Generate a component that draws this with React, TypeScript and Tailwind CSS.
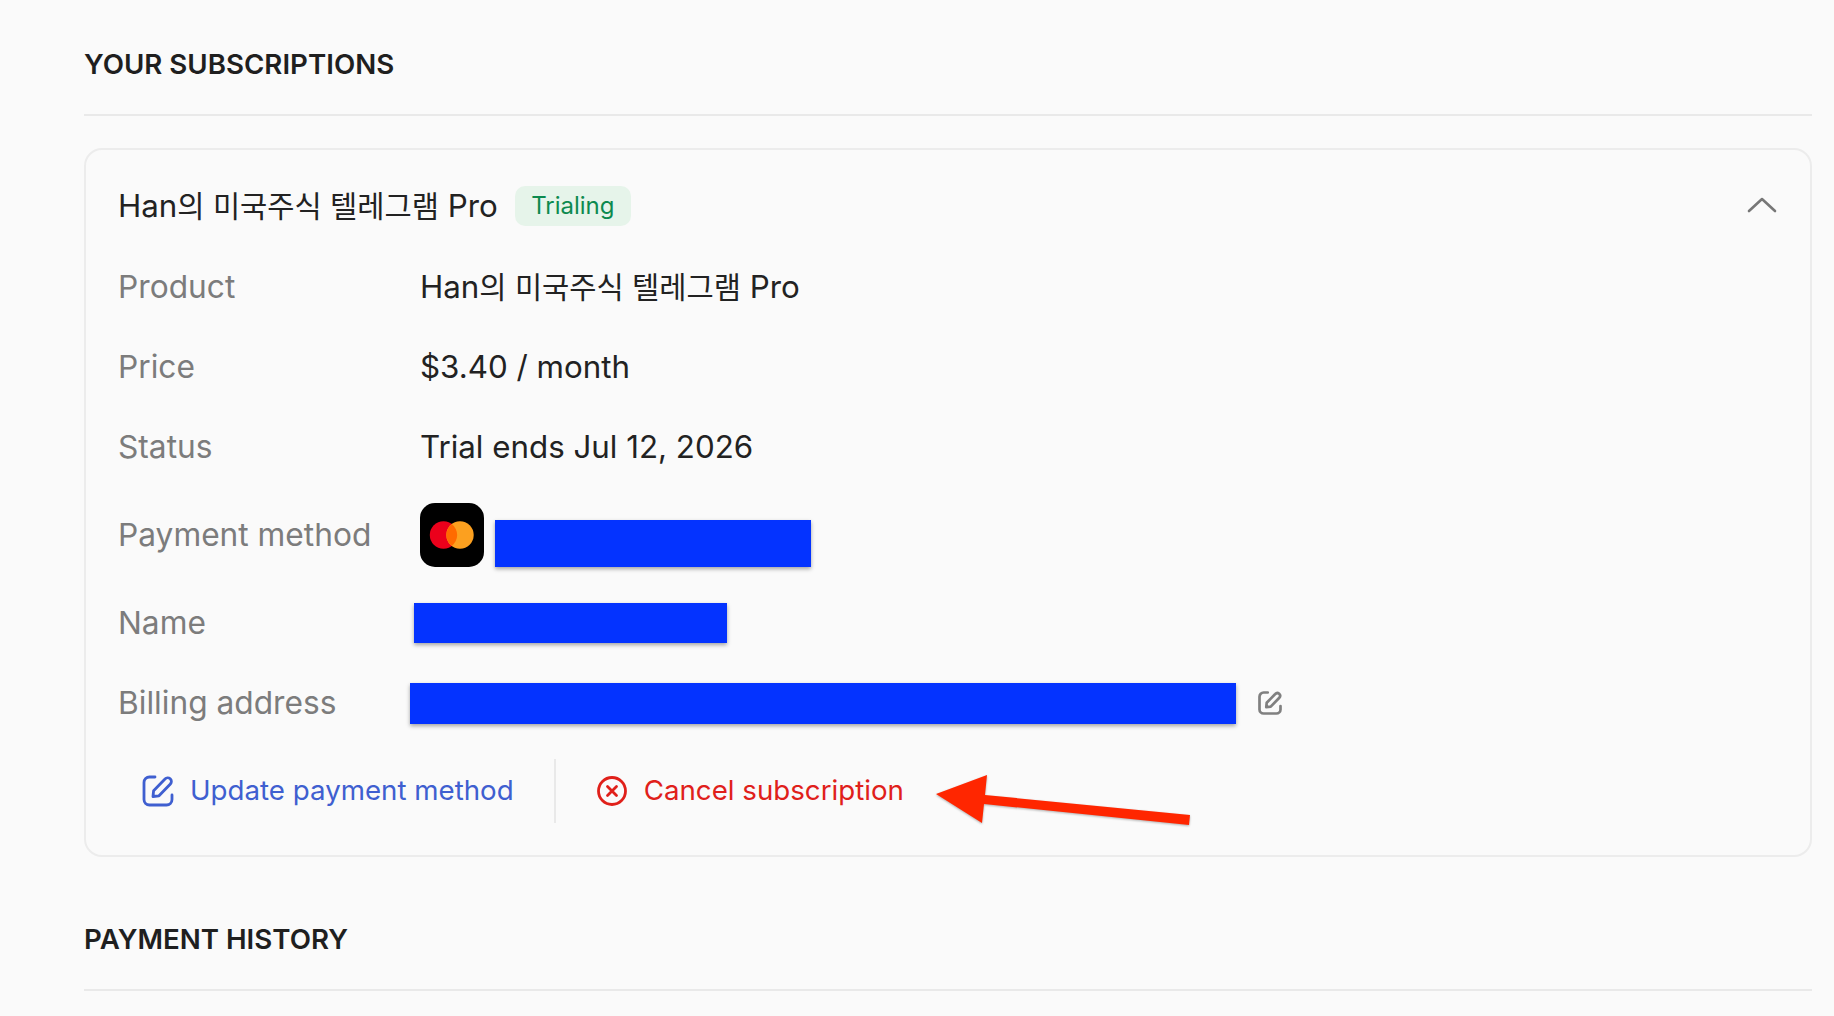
import React from 'react';

const cjk = "font-['Inter','Noto_Sans_CJK_KR',sans-serif]";

const EditIcon = ({ className, strokeWidth }: { className: string; strokeWidth: number }) => (
  <svg viewBox="0 0 32 32" fill="none" stroke="currentColor" strokeWidth={strokeWidth} strokeLinecap="round" strokeLinejoin="round" className={className}>
    <path d="M13 2 H7.5 a5.5 5.5 0 0 0 -5.5 5.5 V24.5 a5.5 5.5 0 0 0 5.5 5.5 H24.5 a5.5 5.5 0 0 0 5.5 -5.5 V20" />
    <path d="M11 21.5 l0.6 -5.8 L23 4 a3.6 3.6 0 0 1 5.4 5 L17 20.8 Z" />
  </svg>
);

const Row = ({ label, className, children }: { label: string; className: string; children: React.ReactNode }) => (
  <div className={`flex items-center ${className}`}>
    <div className="w-[302px] shrink-0 text-[31.7px] text-[#7c7c7c]">{label}</div>
    {children}
  </div>
);

const Redacted = ({ className }: { className: string }) => (
  <div className={`bg-[#0433ff] shadow-[0_2px_4px_rgba(0,0,0,0.35)] ${className}`} />
);

const SectionTitle = ({ children }: { children: React.ReactNode }) => (
  <div className="border-b-2 border-[#e9e9e9] text-[27.7px] leading-[36px] font-semibold text-[#1f1f1f]">{children}</div>
);

// latin runs sit a bit larger than the hangul in the reference
const ProductName = () => (
  <span className="text-[31.3px]">
    Han<span className="text-[29.6px]">의 미국주식 텔레그램</span> Pro
  </span>
);

export default function App() {
  return (
    <div className={`relative h-[1016px] overflow-hidden bg-[#fafafa] pl-[84px] pr-[22px] pt-[46px] text-[31.3px] text-[#222222] ${cjk}`}>
      <SectionTitle><div className="pb-[32px]">YOUR SUBSCRIPTIONS</div></SectionTitle>

      <div className="mt-[32px] h-[709px] rounded-[18px] border-2 border-[#ececec] px-[32px] pt-[36px]">
        <div className="flex h-[40px] items-center justify-between">
          <div className="flex items-center gap-[17px]">
            <ProductName />
            <span className="flex h-[40px] w-[116px] items-center justify-center rounded-[10px] bg-[#e6f4ea] text-[24px] text-[#0d8a4f]">Trialing</span>
          </div>
          <svg viewBox="0 0 30 16" fill="none" stroke="#777777" strokeWidth="2.6" strokeLinecap="round" strokeLinejoin="round" className="mb-[2px] mr-[1px] h-[16px] w-[30px]">
            <path d="M2 14 L15 2 L28 14" />
          </svg>
        </div>

        <div className="mt-[21px]">
          <Row label="Product" className="h-[80px]"><ProductName /></Row>
          <Row label="Price" className="h-[80px]"><span>$3.40 / month</span></Row>
          <Row label="Status" className="h-[80px]"><span>Trial ends Jul 12, 2026</span></Row>

          <Row label="Payment method" className="h-[94px] pt-[2px]">
            <svg viewBox="0 0 64 64" className="h-[64px] w-[64px]">
              <rect width="64" height="64" rx="15" fill="#000000" />
              <circle cx="23.5" cy="32" r="13.7" fill="#eb001b" />
              <circle cx="40" cy="32" r="13.7" fill="#fca01f" />
              <path d="M31.75 21.1 a13.7 13.7 0 0 1 0 21.8 a13.7 13.7 0 0 1 0 -21.8 Z" fill="#ff6a00" />
            </svg>
            <Redacted className="ml-[11px] mt-[16px] h-[47px] w-[316px]" />
          </Row>

          <Row label="Name" className="h-[84px]">
            <Redacted className="-ml-[6px] h-[40px] w-[313px]" />
          </Row>

          <Row label="Billing address" className="h-[76px]">
            <Redacted className="-ml-[10px] h-[41px] w-[826px]" />
            <EditIcon strokeWidth={3.6} className="ml-[22px] h-[24px] w-[24px] text-[#808080]" />
          </Row>
        </div>

        <div className="mt-[18px] flex h-[64px] items-center pl-[24px] text-[27.7px]">
          <EditIcon strokeWidth={2.8} className="h-[32px] w-[32px] text-[#3f5fd0]" />
          <span className="ml-[16px] text-[#3f5fd0]">Update payment method</span>
          <div className="ml-[40px] h-[64px] w-[2px] bg-[#e9e9e9]" />
          <svg viewBox="0 0 30 30" fill="none" stroke="#e0201a" strokeWidth="2.8" strokeLinecap="round" className="ml-[41px] h-[30px] w-[30px]">
            <circle cx="15" cy="15" r="13.5" />
            <path d="M10.5 10.5 L19.5 19.5 M19.5 10.5 L10.5 19.5" />
          </svg>
          <span className="ml-[17px] text-[#e0201a]">Cancel subscription</span>
        </div>
      </div>

      <div className="mt-[64px]">
        <SectionTitle><div className="pb-[32px]">PAYMENT HISTORY</div></SectionTitle>
      </div>

      {/* annotation arrow */}
      <svg viewBox="0 0 260 56" className="absolute left-[934px] top-[773px] h-[56px] w-[260px] drop-shadow-[0_1px_1px_rgba(0,0,0,0.3)]">
        <path d="M2 21 L53 2 L51 22 L256 42 L255 52 L50 31 L48 50 Z" fill="#ff2600" />
      </svg>
    </div>
  );
}
